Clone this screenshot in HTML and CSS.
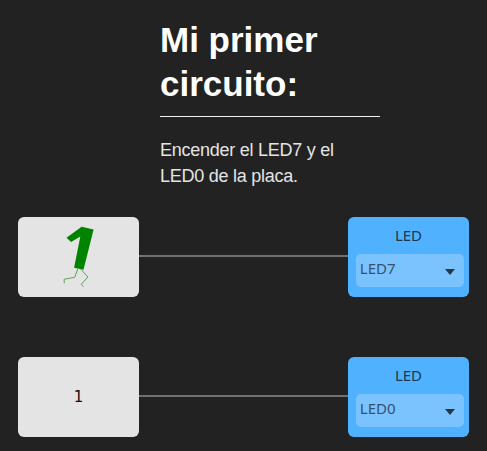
FILE: index.html
```html
<!DOCTYPE html>
<html lang="es">
<head>
<meta charset="utf-8">
<title>Mi primer circuito</title>
<link rel="stylesheet" href="styles.css">
</head>
<body>
<main class="canvas">
  <header class="note">
    <h1>Mi primer circuito:</h1>
    <p>Encender el LED7 y el<br>LED0 de la placa.</p>
  </header>
  <section class="row">
    <div class="block constant">
      <svg class="bit" viewBox="0 0 120 80" width="120" height="80" aria-hidden="true">
        <path fill="#008400" d="M48.5 20.8 63.6 9.8 75.6 12.6 65.5 52.8 56.1 50.8 62.3 19.6 53.1 25Z"/>
        <path class="leg" d="M59.9 51.5 56.7 60.3 46.1 62.3 46.3 66.2M62.7 52 69.9 60 63.3 67.3 65.4 69.8"/>
      </svg>
    </div>
    <div class="wire"></div>
    <div class="block output">
      <div class="label">LED</div>
      <div class="select"><span>LED7</span><i class="arrow"></i></div>
    </div>
  </section>
  <section class="row">
    <div class="block constant">1</div>
    <div class="wire"></div>
    <div class="block output">
      <div class="label">LED</div>
      <div class="select"><span>LED0</span><i class="arrow"></i></div>
    </div>
  </section>
</main>
</body>
</html>
```
FILE: styles.css
```css
* { box-sizing: border-box; }
body { margin: 0; background: #222; overflow: hidden; }
.canvas { width: 487px; height: 451px; padding-left: 18.4px; }
.note {
  width: 220px;
  height: 217px;
  margin-left: 141.6px;
  padding-top: 18px;
  color: #e4e4e4;
  font-family: "Liberation Sans", Arial, sans-serif;
}
h1 {
  margin: 0;
  height: 99px;
  border-bottom: 1px solid #eee;
  color: #fff;
  font-size: 35px;
  line-height: 44px;
}
p {
  margin: 20px 0 0;
  font-size: 18px;
  line-height: 26px;
  letter-spacing: -0.25px;
  white-space: nowrap;
}
.row { display: flex; align-items: center; width: 450.2px; height: 80px; margin-bottom: 60px; }
.block { width: 120.2px; height: 80px; border-radius: 6px; font-family: "Noto Sans", sans-serif; }
.constant {
  display: flex;
  align-items: center;
  justify-content: center;
  background: #e4e4e4;
  color: #111;
  font: 15px "DejaVu Sans", sans-serif;
}
.leg { fill: none; stroke: #5aa45a; stroke-width: 1; }
.wire { flex: 1; height: 2px; margin-bottom: 2px; background: #707070; }
.output { padding: 8px 5px 0 8px; background: #50b1ff; color: #1c3850; }
.label { height: 29px; padding-right: 3px; font-size: 15px; line-height: 20px; text-align: center; }
.select {
  display: flex;
  align-items: center;
  justify-content: space-between;
  height: 33px;
  padding: 0 9px 0 3.4px;
  border-radius: 5px;
  background: #7bc3ff;
  color: #34526c;
  font-size: 15px;
  line-height: 20px;
}
.select span { margin-top: -5px; }
.arrow { margin-top: 3px; border: solid transparent; border-width: 6px 5px 0; border-top-color: #25384a; }
```
